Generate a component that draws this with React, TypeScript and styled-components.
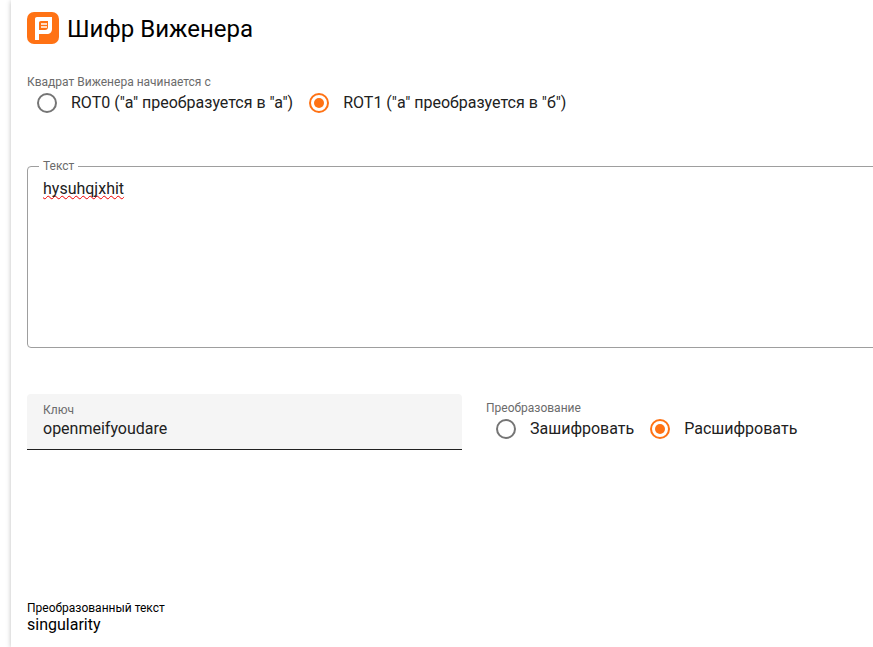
import React, { useState } from "react";
import styled, { createGlobalStyle } from "styled-components";

const GlobalStyle = createGlobalStyle`
  *, *::before, *::after { box-sizing: border-box; }
  body {
    margin: 0;
    background: #fff;
    color: #212121;
    font-family: Roboto, "Liberation Sans", sans-serif;
    font-size: 16px;
    line-height: 20px;
    overflow-x: clip;
  }
`;

const Page = styled.div`
  display: flex;
  min-height: 100vh;
  padding-left: 11px;
  overflow: hidden;
  background: #fff;
`;

const Card = styled.main`
  flex: 1;
  min-width: 0;
  margin-right: -64px;
  padding: 11px 16px;
  background: #fff;
  box-shadow: 0 1px 5px rgba(0, 0, 0, 0.26);
`;

const Header = styled.header`
  display: flex;
  align-items: center;
  gap: 8px;
  margin-bottom: 30px;
`;

const Title = styled.h1`
  margin: 0;
  padding-top: 2px;
  font-size: 24px;
  font-weight: 400;
  line-height: 32px;
  color: #000;
`;

const Group = styled.fieldset`
  min-width: 0;
  margin: 0;
  padding: 0;
  border: 0;
`;

const GroupTitle = styled.legend`
  padding: 0;
  margin-bottom: 4px;
  font-size: 12px;
  line-height: 14px;
  color: #6b6b6b;
`;

const Options = styled.div`
  display: flex;
  flex-wrap: wrap;
  column-gap: 16px;
  padding-left: 10px;
`;

const Option = styled.label`
  display: flex;
  align-items: center;
  gap: 14px;
  white-space: nowrap;
`;

const Radio = styled.input`
  appearance: none;
  flex: none;
  display: grid;
  place-items: center;
  width: 20px;
  height: 20px;
  margin: 0;
  border: 2px solid #757575;
  border-radius: 50%;

  &:checked { border-color: #ff7214; }
  &:checked::before {
    content: "";
    width: 10px;
    height: 10px;
    border-radius: 50%;
    background: #ff7214;
  }
`;

const OutlinedField = styled.fieldset`
  min-width: 0;
  margin: 46px 0;
  padding: 0 15px 0 11px;
  border: 1px solid #9e9e9e;
  border-radius: 4px;
`;

const OutlinedLegend = styled.legend`
  padding: 0 4px;
  font-size: 12px;
  line-height: 14px;
  color: #6b6b6b;
`;

const TextArea = styled.textarea`
  display: block;
  width: 100%;
  height: 174px;
  padding: 4px 4px 0;
  border: 0;
  outline: 0;
  resize: none;
  background: transparent;
  color: #212121;
  font: inherit;
  line-height: 24px;
  text-decoration: underline wavy #f00000 1px;
  text-decoration-skip-ink: none;
`;

const Columns = styled.div`
  display: grid;
  grid-template-columns: 1fr 1fr;
  gap: 24px;
`;

const FilledField = styled.label`
  display: flex;
  flex-direction: column;
  height: 56px;
  padding: 9px 16px 0;
  border-bottom: 1px solid #212121;
  border-radius: 4px 4px 0 0;
  background: #f5f5f5;
`;

const FilledLabel = styled.span`
  font-size: 12px;
  line-height: 14px;
  color: #6b6b6b;
`;

const TextInput = styled.input`
  width: 100%;
  height: 22px;
  padding: 0;
  border: 0;
  outline: 0;
  background: transparent;
  color: #212121;
  font: inherit;
`;

const ModeColumn = styled.div`
  padding-top: 7px;
`;

const Result = styled.section`
  margin-top: 150px;
  color: #000;
`;

const ResultTitle = styled.h2`
  margin: 0;
  font-size: 12px;
  font-weight: 400;
  line-height: 16px;
`;

const ResultText = styled.output`
  display: block;
  line-height: 18px;
`;

function Logo() {
  return (
    <svg width="32" height="32" viewBox="0 0 32 32" aria-hidden="true">
      <rect width="32" height="32" rx="7" fill="#ff7214" />
      <path
        fill="#fff"
        fillRule="evenodd"
        d="M10 5H25V17C25 20 23 22 20 22H12V28H8V7C8 5.700 8.700 5 10 5ZM14 9C12.700 9 12 9.700 12 11V18H18C20 18 21 17 21 15V9Z"
      />
      <path d="M14 12H20M14 15H20" stroke="#fff" strokeWidth="1.500" />
    </svg>
  );
}

type RadioGroupProps = {
  title: string;
  name: string;
  options: string[];
};

function RadioGroup({ title, name, options }: RadioGroupProps) {
  const [selected, setSelected] = useState(1);
  return (
    <Group>
      <GroupTitle>{title}</GroupTitle>
      <Options>
        {options.map((option, index) => (
          <Option key={option}>
            <Radio
              type="radio"
              name={name}
              checked={selected === index}
              onChange={() => setSelected(index)}
            />
            {option}
          </Option>
        ))}
      </Options>
    </Group>
  );
}

export default function App() {
  return (
    <>
      <GlobalStyle />
      <Page>
        <Card>
          <Header>
            <Logo />
            <Title>Шифр Виженера</Title>
          </Header>
          <RadioGroup
            title="Квадрат Виженера начинается с"
            name="square"
            options={[
              'ROT0 ("а" преобразуется в "а")',
              'ROT1 ("а" преобразуется в "б")',
            ]}
          />
          <OutlinedField>
            <OutlinedLegend>
              <label htmlFor="text">Текст</label>
            </OutlinedLegend>
            <TextArea id="text" defaultValue="hysuhqjxhit" />
          </OutlinedField>
          <Columns>
            <FilledField>
              <FilledLabel>Ключ</FilledLabel>
              <TextInput type="text" defaultValue="openmeifyoudare" />
            </FilledField>
            <ModeColumn>
              <RadioGroup
                title="Преобразование"
                name="mode"
                options={["Зашифровать", "Расшифровать"]}
              />
            </ModeColumn>
          </Columns>
          <Result>
            <ResultTitle>Преобразованный текст</ResultTitle>
            <ResultText>singularity</ResultText>
          </Result>
        </Card>
      </Page>
    </>
  );
}
